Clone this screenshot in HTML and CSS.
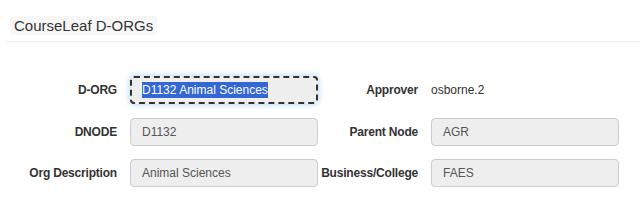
FILE: index.html
```html
<!DOCTYPE html>
<html lang="en">

<head>
  <meta charset="UTF-8">
  <meta name="viewport" content="width=device-width, initial-scale=1.0">
  <title>CourseLeaf D-ORGs</title>
  <link rel="stylesheet" href="styles.css">
</head>

<body>
  <div class="page">
    <div class="header">
      <h3 class="title">CourseLeaf D-ORGs</h3>
    </div>

    <div class="dorg-form">
      <label class="lbl">D-ORG</label>
      <div class="field focused"><span class="sel">D1132 Animal Sciences</span></div>
      <label class="lbl">Approver</label>
      <div class="static">osborne.2</div>

      <label class="lbl">DNODE</label>
      <div class="field">D1132</div>
      <label class="lbl">Parent Node</label>
      <div class="field">AGR</div>

      <label class="lbl">Org Description</label>
      <div class="field">Animal Sciences</div>
      <label class="lbl">Business/College</label>
      <div class="field">FAES</div>
    </div>
  </div>
</body>

</html>
```

FILE: styles.css
```css
* {
  margin: 0;
  padding: 0;
  box-sizing: border-box;
  font-family: 'Liberation Sans', Arial, sans-serif;
}

body {
  background: #fff;
  color: #333;
}

.page {
  width: 640px;
  height: 208px;
}

.header {
  margin: 0 0 0 5px;
  padding: 16px 0 6px 5px;
  border-bottom: 1px solid #eee;
}

.title {
  display: inline-block;
  font-size: 15px;
  font-weight: normal;
  line-height: 19px;
  padding: 0 4px;
  background: #f7f7f7;
  border-radius: 3px;
}

.dorg-form {
  display: grid;
  grid-template-columns: 130px 188px 113px 188px;
  grid-auto-rows: 28px;
  row-gap: 13.5px;
  align-items: center;
  margin-top: 34px;
}

.lbl {
  font-size: 12px;
  font-weight: bold;
  letter-spacing: -0.2px;
  text-align: right;
  padding-right: 13px;
  white-space: nowrap;
}

.field {
  height: 28px;
  padding: 0 11px;
  font-size: 12px;
  line-height: 26px;
  color: #555;
  background: #eee;
  border: 1px solid #ccc;
  border-radius: 4px;
}

.field.focused {
  border: 2px dashed #333;
  line-height: 24px;
  padding: 0 10px;
  box-shadow: 0 0 6px rgba(102, 175, 233, 0.6);
}

.sel {
  background: #3367d6;
  color: #fff;
  padding: 1px 0;
}

.static {
  font-size: 12px;
  color: #333;
}
```
